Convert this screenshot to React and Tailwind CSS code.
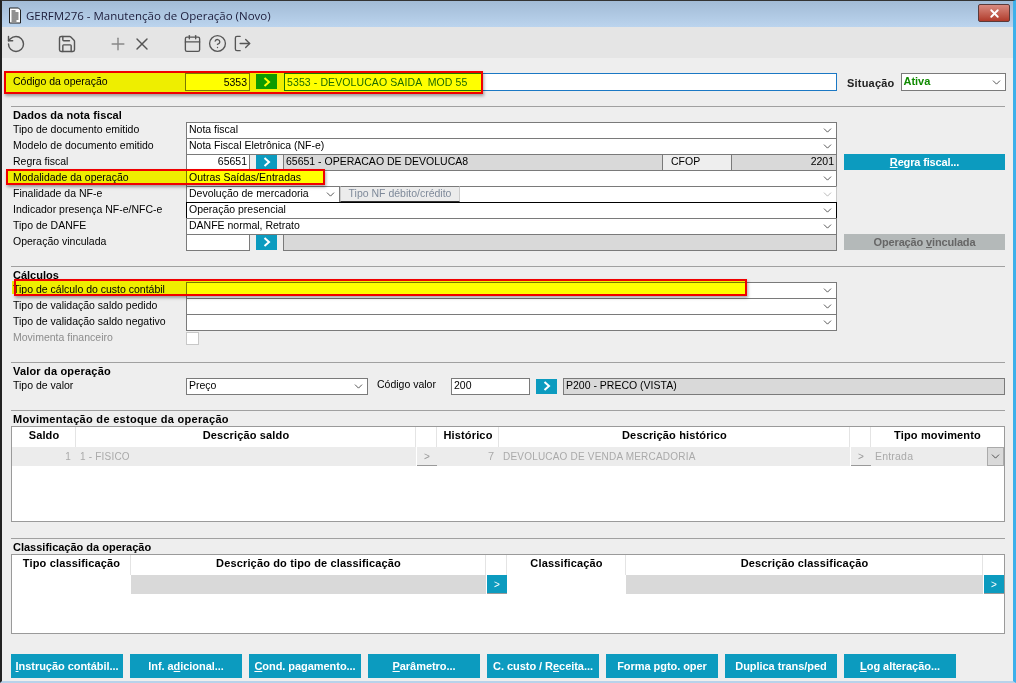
import React from "react";
import { RotateCcw, Save, Plus, X, Calendar, CircleHelp, LogOut, ChevronDown } from "lucide-react";

const Label = ({ children, muted, cls = "-mt-[2px]" }) => (
  <div className={`w-[175px] shrink-0 pl-[2px] text-[10.5px] leading-[13px] ${cls} ${muted ? "text-[#8c8c8c]" : "text-black"}`}>{children}</div>
);

const Chev = ({ c = "#333" }) => <ChevronDown size={13} strokeWidth={1.5} color={c} className="shrink-0" />;

const Sel = ({ children, w = "w-[651px]", dark, light }) => (
  <div className={`${w} h-[17px] -mb-px shrink-0 flex items-center justify-between pl-[2px] pr-[2px] text-[10.5px] border ${dark ? "border-black" : light ? "border-[#c8c8c8]" : "border-[#7a7a7a]"} bg-white`}>
    <span className="whitespace-nowrap pb-[2px]">{children}</span>
    <Chev c={light ? "#aaa" : "#333"} />
  </div>
);

const Go = ({ cls = "" }) => (
  <div className={`w-[21px] h-[15px] shrink-0 flex items-center justify-center bg-[#0c9bbf] ${cls}`}>
    <svg width="8" height="10" viewBox="0 0 8 10" fill="none"><path d="M1.5 1L6 5L1.5 9" stroke="#fff" strokeWidth="2" /></svg>
  </div>
);

const Row = ({ children }) => <div className="flex items-center h-4">{children}</div>;

const Field = ({ children, w, right, grey }) => (
  <div className={`${w} h-[17px] -mb-px shrink-0 flex items-center px-[2px] pb-[2px] text-[10.5px] border border-[#7a7a7a] whitespace-nowrap ${grey ? "bg-[#d9d9d9]" : "bg-white"} ${right ? "justify-end" : ""}`}>{children}</div>
);

const Section = ({ title, cls = "", tcls = "" }) => (
  <div className={`border-t border-[#a0a0a0] h-[16px] pl-[2px] ${cls}`}>
    <div className={`text-[11px] font-bold leading-[16px] ${tcls}`}>{title}</div>
  </div>
);

const ActionBtn = ({ children, dim }) => (
  <div className={`w-[161px] h-4 flex items-center justify-center text-[11px] font-bold tracking-[-0.15px] ${dim ? "bg-[#b4b9b9] text-[#666]" : "bg-[#0c9bbf] text-white"}`}>{children}</div>
);

const Th = ({ children }) => (
  <div className="flex items-center justify-center h-5 pb-[3px] pl-[1px] border-r border-[#e4e4e4] text-[11px] font-bold tracking-[0.15px]">{children}</div>
);

const U = ({ children }) => <span className="underline">{children}</span>;

const SmallGo = ({ active }) => (
  <div className={`h-[19px] w-[20px] border-b border-[#999] flex items-center justify-center text-[10px] ml-[1px] ${active ? "bg-[#0c9bbf] text-white" : "bg-[#ececec] text-[#999]"}`}>&gt;</div>
);

const Mark = ({ box, fill = "inset-0" }) => (
  <div className={`absolute pointer-events-none border-[2px] border-[#f00000] shadow-[1px_2px_3px_rgba(0,0,0,0.35)] ${box}`}>
    <div className={`absolute bg-[#ffff00] mix-blend-multiply ${fill}`} />
  </div>
);

const bottomButtons = [
  <><U>I</U>nstrução contábil...</>,
  <>Inf. a<U>d</U>icional...</>,
  <><U>C</U>ond. pagamento...</>,
  <><U>P</U>arâmetro...</>,
  <>C. custo / R<U>e</U>ceita...</>,
  "Forma pgto. oper",
  "Duplica trans/ped",
  <><U>L</U>og alteração...</>,
];

export default function App() {
  return (
    <div className="w-[1016px] h-[683px] overflow-hidden relative bg-[#eeeeee] border-t border-t-[#333] border-l-2 border-l-[#222] border-r-[3px] border-r-[#3db0ea] border-b-2 border-b-[#b8d2ea] text-black" style={{ fontFamily: '"Liberation Sans", Arial, sans-serif' }}>
      {/* title bar */}
      <div className="h-[26px] flex items-center bg-gradient-to-b from-[#a2bbd6] to-[#bbd4ee] pl-[6px] pr-[3px]">
        <svg width="14" height="17" viewBox="2 0 13 17" className="shrink-0 mt-[2px]">
          <path d="M3 1H12L14 3V16H3Z" fill="#fff" stroke="#222" />
          <path d="M5 4H9M5 6H12M5 8H12M5 10H12M5 12H12M5 14H10" stroke="#222" />
        </svg>
        <div className="ml-[4px] mt-[3px] text-[11.5px] text-[#1c1c3a]" style={{ fontFamily: '"Open Sans", sans-serif' }}>GERFM276 - Manutenção de Operação (Novo)</div>
        <div className="ml-auto mb-[2px] w-[32px] h-[18px] rounded-[2px] border border-[#5a3a3a] bg-gradient-to-b from-[#d88a80] to-[#b03a2a] flex items-center justify-center">
          <X size={13} strokeWidth={3.4} color="#fff" />
        </div>
      </div>
      {/* toolbar */}
      <div className="h-[31px] bg-[#e5e5e5] flex items-center text-[#555] pl-[4px] pt-[2px]">
        <RotateCcw size={20} strokeWidth={1.7} />
        <Save size={20} strokeWidth={1.7} className="ml-[31px]" />
        <Plus size={20} strokeWidth={1.7} className="ml-[31px]" color="#888" />
        <X size={20} strokeWidth={1.7} className="ml-[4px]" />
        <Calendar size={19} strokeWidth={1.7} className="ml-[31px]" />
        <CircleHelp size={19} strokeWidth={1.7} className="ml-[6px]" />
        <LogOut size={19} strokeWidth={1.7} className="ml-[6px]" />
      </div>
      <div className="pl-[9px] pr-[8px]">
        {/* codigo */}
        <div className="flex items-start h-[18px] mt-[15px]">
          <Label cls="mt-[2px]">Código da operação</Label>
          <div className="w-[65px] -ml-px h-[18px] bg-white border border-[#7a7a7a] flex items-center justify-end pr-[2px] pt-[2px] text-[10.5px] shrink-0">5353</div>
          <Go cls="ml-[6px] mt-[1px]" />
          <div className="ml-[7px] w-[553px] shrink-0 h-[18px] bg-white border border-[#1b78c4] flex items-center pl-[2px] pt-[2px] text-[10.5px] tracking-[0.1px] text-[#1c6a00] whitespace-pre">5353 - DEVOLUCAO SAIDA  MOD 55</div>
          <div className="ml-[10px] text-[11px] font-bold tracking-[0.2px] mt-[2px] text-[#222]">Situação</div>
          <div className="ml-[7px] w-[105px] shrink-0 h-[18px] bg-white border border-[#7a7a7a] flex items-center justify-between pl-[1px] pr-[2px] text-[11px] font-bold text-[#0f8a00]">
            <span className="-mt-[2px]">Ativa</span>
            <Chev />
          </div>
        </div>

        <Section title="Dados da nota fiscal" cls="mt-[15px]" tcls="tracking-[0.1px]" />
        <Row><Label>Tipo de documento emitido</Label><Sel>Nota fiscal</Sel></Row>
        <Row><Label>Modelo de documento emitido</Label><Sel>Nota Fiscal Eletrônica (NF-e)</Sel></Row>
        <Row>
          <Label>Regra fiscal</Label>
          <Field w="w-[64px]" right>65651</Field>
          <Go cls="ml-[6px]" />
          <Field w="w-[380px] ml-[6px]" grey>65651 - OPERACAO DE DEVOLUCA8</Field>
          <div className="w-[68px] shrink-0 h-[17px] -mb-px flex items-center pl-[8px] pb-[2px] text-[10.5px] border-y border-[#7a7a7a] bg-[#eeeeee]">CFOP</div>
          <Field w="w-[106px]" right grey>2201</Field>
          <div className="ml-[7px] shrink-0"><ActionBtn><span><U>R</U>egra fiscal...</span></ActionBtn></div>
        </Row>
        <Row><Label>Modalidade da operação</Label><Sel>Outras Saídas/Entradas</Sel></Row>
        <Row>
          <Label>Finalidade da NF-e</Label>
          <Sel w="w-[154px]">Devolução de mercadoria</Sel>
          <div className="w-[120px] h-[16px] bg-[#ececec] border-b border-[#333] border-t border-t-[#7a7a7a] border-x border-x-[#ccc] flex items-center justify-center pb-[1px] text-[10.5px] text-[#7f8a9a] shrink-0">Tipo NF débito/crédito</div>
          <div className="w-[377px] shrink-0 h-[17px] -mb-px border-t border-t-[#7a7a7a] border-b border-b-[#c8c8c8] border-r border-r-[#c8c8c8] bg-white flex justify-end items-center pr-[2px]"><Chev c="#aaa" /></div>
        </Row>
        <Row><Label>Indicador presença NF-e/NFC-e</Label><Sel dark>Operação presencial</Sel></Row>
        <Row><Label>Tipo de DANFE</Label><Sel>DANFE normal, Retrato</Sel></Row>
        <Row>
          <Label>Operação vinculada</Label>
          <Field w="w-[64px]" />
          <Go cls="ml-[6px]" />
          <Field w="w-[554px] ml-[6px]" grey />
          <div className="ml-[7px] shrink-0"><ActionBtn dim><span>Operação <U>v</U>inculada</span></ActionBtn></div>
        </Row>

        <Section title="Cálculos" cls="mt-[16px]" />
        <Row><Label>Tipo de cálculo do custo contábil</Label><Sel /></Row>
        <Row><Label>Tipo de validação saldo pedido</Label><Sel /></Row>
        <Row><Label>Tipo de validação saldo negativo</Label><Sel /></Row>
        <Row>
          <Label muted>Movimenta financeiro</Label>
          <div className="w-[13px] h-[13px] bg-white border border-[#c8c8c8]" />
        </Row>

        <Section title="Valor da operação" cls="mt-[16px]" tcls="tracking-[0.18px]" />
        <Row>
          <Label>Tipo de valor</Label>
          <Sel w="w-[182px]">Preço</Sel>
          <div className="ml-[9px] w-[74px] shrink-0 text-[10.5px] -mt-[2px]">Código valor</div>
          <Field w="w-[79px]">200</Field>
          <Go cls="ml-[6px]" />
          <Field w="w-[442px] ml-[6px]" grey>P200 - PRECO (VISTA)</Field>
        </Row>

        <Section title="Movimentação de estoque da operação" cls="mt-[16px]" tcls="tracking-[0.3px]" />
        <div className="h-[96px] bg-white border border-[#9a9a9a]">
          <div className="grid grid-cols-[64px_340px_21px_62px_351px_21px_1fr]">
            <Th>Saldo</Th>
            <Th>Descrição saldo</Th>
            <Th />
            <Th>Histórico</Th>
            <Th>Descrição histórico</Th>
            <Th />
            <div className="flex items-center justify-center h-5 pb-[3px] text-[11px] font-bold tracking-[0.15px]">Tipo movimento</div>
            <div className="h-[19px] bg-[#ececec] text-[#aaa] text-[10px] tracking-[0.2px] flex items-center justify-end pr-[5px]">1</div>
            <div className="h-[19px] bg-[#ececec] text-[#aaa] text-[10px] tracking-[0.2px] flex items-center pl-[4px]">1 - FISICO</div>
            <SmallGo />
            <div className="h-[19px] bg-[#ececec] text-[#aaa] text-[11px] flex items-center justify-end pr-[5px]">7</div>
            <div className="h-[19px] bg-[#ececec] text-[#aaa] text-[10px] tracking-[0.2px] flex items-center pl-[4px]">DEVOLUCAO DE VENDA MERCADORIA</div>
            <SmallGo />
            <div className="h-[19px] bg-[#ececec] text-[#aaa] text-[10.5px] tracking-[0.2px] flex items-center justify-between pl-[4px]">
              Entrada
              <div className="w-[17px] h-[19px] bg-[#d9d9d9] border border-[#aaa] flex items-center justify-center"><Chev /></div>
            </div>
          </div>
        </div>

        <Section title="Classificação da operação" cls="mt-[16px]" />
        <div className="h-[80px] bg-white border border-[#9a9a9a]">
          <div className="grid grid-cols-[119px_355px_21px_119px_357px_1fr]">
            <Th>Tipo classificação</Th>
            <Th>Descrição do tipo de classificação</Th>
            <Th />
            <Th>Classificação</Th>
            <Th>Descrição classificação</Th>
            <div className="h-5" />
            <div className="h-[19px]" />
            <div className="h-[19px] bg-[#d9d9d9]" />
            <SmallGo active />
            <div className="h-[19px]" />
            <div className="h-[19px] bg-[#d9d9d9]" />
            <SmallGo active />
          </div>
        </div>

        <div className="flex gap-[7px] mt-[20px]">
          {bottomButtons.map((b, i) => (
            <div key={i} className="w-[112px] h-[24px] shrink-0 bg-[#0c9bbf] text-white text-[11px] font-bold tracking-[-0.05px] flex items-center justify-center whitespace-nowrap">{b}</div>
          ))}
        </div>
      </div>

      {/* highlight annotations drawn over the form */}
      <Mark box="left-[2px] top-[70px] w-[479px] h-[23px]" />
      <Mark box="left-[4px] top-[168px] w-[319px] h-[16px]" />
      <Mark box="left-[12px] top-[278px] w-[733px] h-[17px]" fill="-left-[4px] top-0 bottom-0 right-0" />
    </div>
  );
}
